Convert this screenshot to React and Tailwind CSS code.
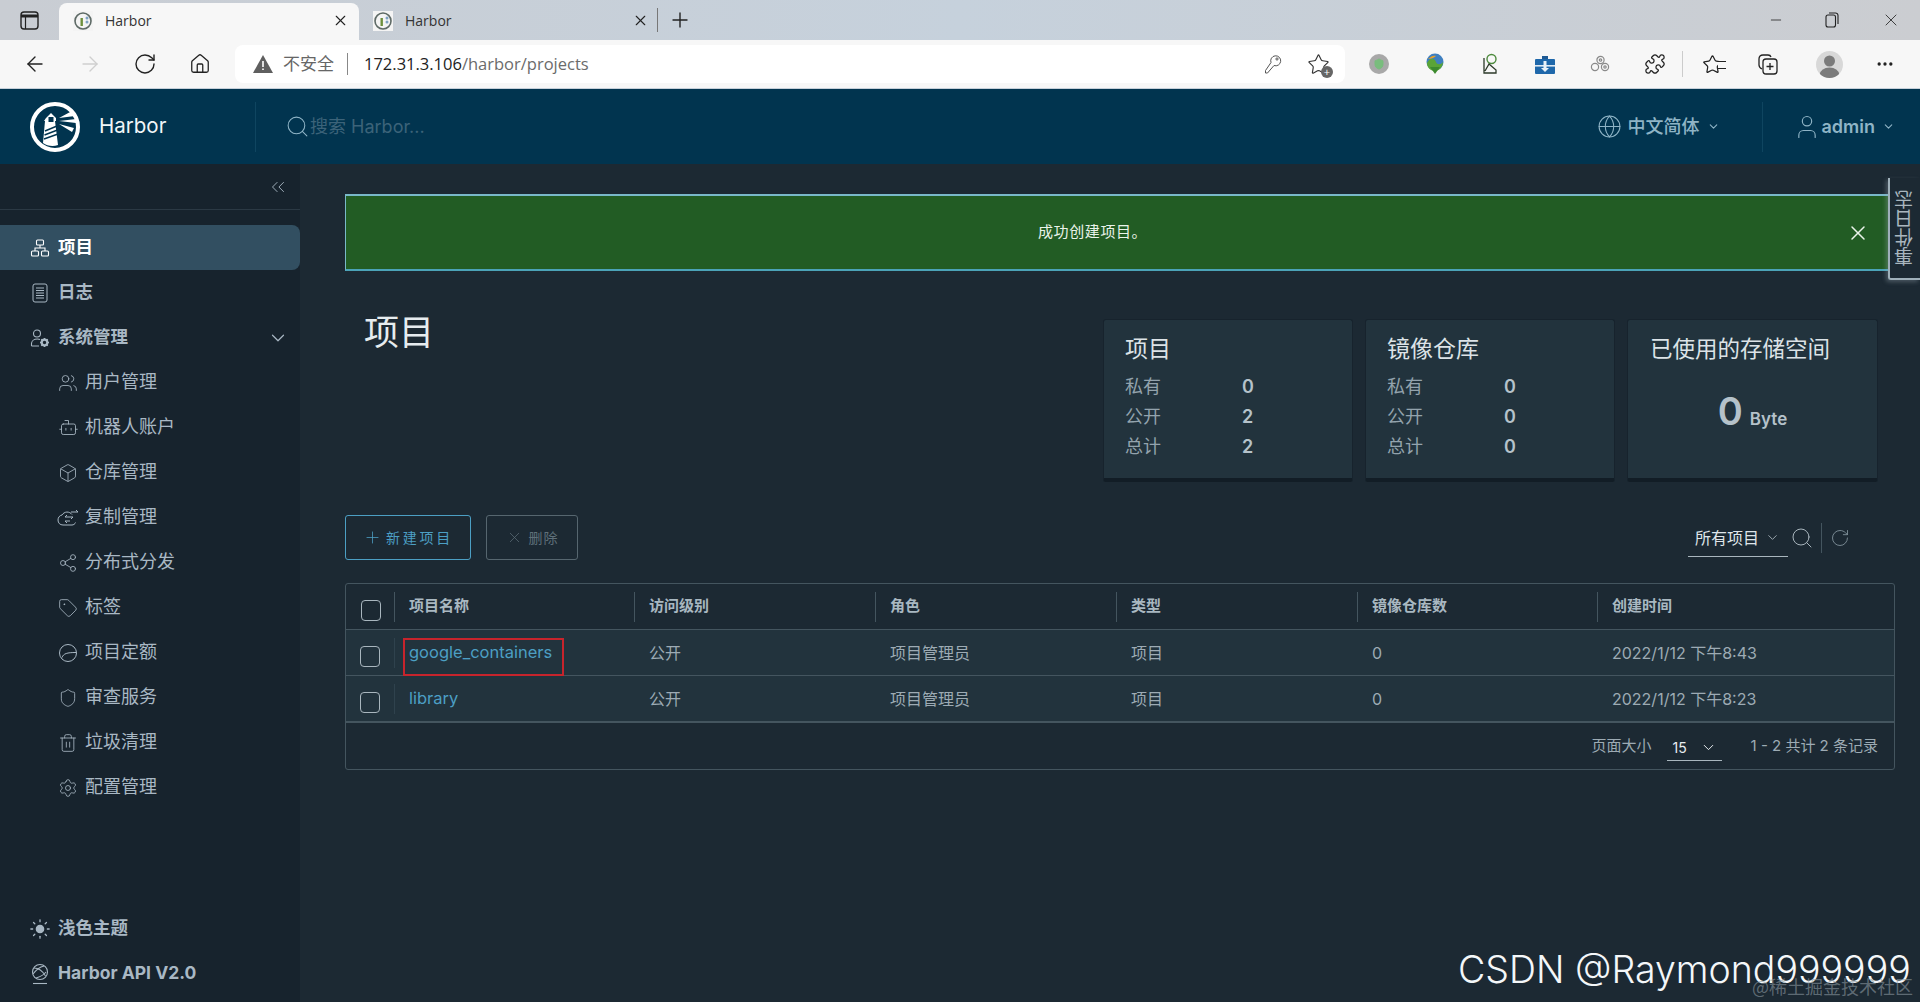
import React from 'react';
import {
  ArrowLeft, ArrowRight, RotateCw, Home, Puzzle, MoreHorizontal, X, Plus, Minus,
  ChevronDown, ChevronsLeft, Search, Globe, User, Share2, Tag, Shield, Trash2, Settings, Box,
  Bot, Users, Sun, Star,
} from 'lucide-react';

const UI = { fontFamily: '"Inter", "Noto Sans CJK SC", sans-serif' };
const CHROME = { fontFamily: '"Open Sans", "Noto Sans CJK SC", sans-serif' };

function Favicon() {
  return (
    <svg width="20" height="20" viewBox="0 0 20 20">
      <rect width="20" height="20" fill="#f4f4f4" />
      <circle cx="10" cy="10" r="8" fill="none" stroke="#5e6a66" strokeWidth="1.6" />
      <rect x="7.5" y="7" width="2.4" height="8" fill="#6d8f3c" />
      <circle cx="14" cy="7" r="1.5" fill="#7ea3c4" />
      <circle cx="14" cy="11" r="1.5" fill="#7ea3c4" />
    </svg>
  );
}

function Tab({ active }) {
  return (
    <div className={`flex items-center w-[300px] h-[37px] pl-[14px] pr-[10px] pb-[2px] text-[14px] text-[#333] ${active ? 'bg-[#f7f7f7] rounded-t-lg' : ''}`}>
      <Favicon />
      <span className="ml-[12px] flex-1">Harbor</span>
      <X size={17} strokeWidth={1.6} className="text-[#222]" />
    </div>
  );
}

function TabStrip() {
  return (
    <div className="h-[40px] flex items-end bg-gradient-to-r from-[#c9cdd3] via-[#c6d1dc] to-[#cbcdd1] shrink-0">
      <div className="w-[59px] h-[40px] flex items-center justify-center">
        <svg width="19" height="19" viewBox="0 0 19 19" fill="none">
          <rect x="1" y="1" width="17" height="17" rx="3" stroke="#222" strokeWidth="1.4" />
          <path d="M1 5h17" stroke="#222" strokeWidth="3" />
          <path d="M5.5 5v13" stroke="#222" strokeWidth="1.2" />
        </svg>
      </div>
      <Tab active />
      <Tab />
      <div className="h-[40px] flex items-center -ml-[2px]">
        <div className="w-px h-[24px] bg-[#777]" />
        <Plus size={24} strokeWidth={1.4} className="ml-[10px] text-[#222]" />
      </div>
      <div className="ml-auto h-[40px] flex items-center text-[#222]">
        <Minus size={16} strokeWidth={1.2} className="mr-[41px]" />
        <svg width="14" height="16" viewBox="0 0 14 16" fill="none" stroke="#222" strokeWidth="1.1" className="mr-[42px]">
          <rect x="1" y="3" width="9.5" height="12" rx="2" />
          <path d="M4 1h6.5A2.5 2.5 0 0 1 13 3.5V12" />
        </svg>
        <X size={20} strokeWidth={1} className="mr-[19px]" />
      </div>
    </div>
  );
}

function ToolbarSlot({ width, children }) {
  return <div style={{ width }} className="flex items-center justify-center shrink-0">{children}</div>;
}

function Toolbar() {
  return (
    <div className="h-[49px] bg-[#f7f7f7] border-b border-[#c6d0da] flex items-center shrink-0" style={CHROME}>
      <div className="w-[235px] flex items-center pl-[23px] gap-[31px] text-[#222] shrink-0">
        <ArrowLeft size={24} strokeWidth={1.4} />
        <ArrowRight size={24} strokeWidth={1.4} className="text-[#cfcfcf]" />
        <RotateCw size={24} strokeWidth={1.4} />
        <Home size={22} strokeWidth={1.4} className="ml-px" />
      </div>
      <div className="w-[1110px] h-[38px] bg-white rounded-lg flex items-center pl-[18px] shrink-0">
        <svg width="20" height="18" viewBox="0 0 20 18">
          <path d="M10 0 20 18H0Z" fill="#5f5f5f" />
          <path d="M9.2 6h1.6v6H9.2zM9.2 13.4h1.6V15H9.2z" fill="#fff" />
        </svg>
        <span className="ml-[10px] text-[17px] text-[#666]">不安全</span>
        <div className="w-px h-[22px] bg-[#888] ml-[13px]" />
        <span className="ml-[16px] text-[16.5px] text-[#222]">172.31.3.106<span className="text-[#6b6b6b]">/harbor/projects</span></span>
        <svg width="18" height="20" viewBox="0 0 18 20" fill="none" stroke="#555" strokeWidth="1" className="ml-auto mr-[25px]">
          <path d="M7 8.500a5 5 0 1 1 3 3L3.500 19H1.500v-2.500z" />
          <circle cx="13" cy="5" r="1.100" />
        </svg>
        <div className="relative mr-[15px]">
          <Star size={23} strokeWidth={1.2} className="text-[#333]" />
          <span className="absolute -right-[3px] -bottom-[2px] w-[12px] h-[12px] rounded-full bg-[#666] text-white text-[11px] leading-[11px] text-center">+</span>
        </div>
      </div>
      <div className="flex items-center ml-[11px]">
        <ToolbarSlot width={51}>
          <div className="w-[20px] h-[20px] rounded-full bg-[#a8a8a8] flex items-center justify-center mr-[5px]">
            <Shield size={12} fill="#79bd7d" stroke="#79bd7d" />
          </div>
        </ToolbarSlot>
        <ToolbarSlot width={55}>
          <svg width="20" height="22" viewBox="0 0 20 22">
            <circle cx="10" cy="9" r="8.5" fill="#3f7fc0" />
            <path d="M2 10c3-6 8-5 9-1 1 3 5 3 7 0 0 5-4 9-8 9-5 0-8-4-8-8Z" fill="#5aa437" />
            <path d="M5 14h10l-5 7Z" fill="#3c8a2e" />
            <path d="M3 6c3-3 6-4 8-3-2 2-5 3-8 3Z" fill="#e8a12a" />
          </svg>
        </ToolbarSlot>
        <ToolbarSlot width={55}>
          <svg width="16" height="22" viewBox="0 0 16 22" fill="none">
            <circle cx="9.5" cy="6" r="4.5" stroke="#4d8a3d" strokeWidth="1.4" />
            <path d="M2 5v15h12v-3L7 11 3 18" stroke="#2d3a2a" strokeWidth="1.3" />
          </svg>
        </ToolbarSlot>
        <ToolbarSlot width={55}>
          <svg width="20" height="21" viewBox="0 0 20 21">
            <path d="M7 2h6v4H7z" fill="#1e5a94" />
            <rect y="5" width="20" height="15" rx="1" fill="#1f68ab" />
            <path d="M0 11h20v1.6H0z" fill="#dfeaf4" />
            <path d="M8.5 7h3v7h2.5L10 18l-4-4h2.5z" fill="#eaf2f8" />
          </svg>
        </ToolbarSlot>
        <ToolbarSlot width={55}>
          <svg width="20" height="18" viewBox="0 0 20 18" fill="none" stroke="#8a8a8a" strokeWidth="1.2">
            <circle cx="5" cy="12" r="3.6" />
            <circle cx="10.5" cy="5" r="3.6" />
            <circle cx="15" cy="12" r="3.6" />
            <circle cx="15" cy="12" r="1.2" />
            <circle cx="10.5" cy="5" r="1.2" />
          </svg>
        </ToolbarSlot>
        <ToolbarSlot width={55}>
          <Puzzle size={22} strokeWidth={1.4} className="text-[#222]" />
        </ToolbarSlot>
        <div className="w-px h-[26px] bg-[#ccc] shrink-0" />
        <ToolbarSlot width={58}>
          <div className="relative">
            <Star size={21} strokeWidth={1.4} className="text-[#222]" />
            <div className="absolute right-[-3px] top-[7px] w-[8px] h-[8px] border-y border-[#222] bg-[#f7f7f7]" />
          </div>
        </ToolbarSlot>
        <ToolbarSlot width={54}>
          <svg width="22" height="22" viewBox="0 0 22 22" fill="none" stroke="#222" strokeWidth="1.3">
            <path d="M5 16C3 15 2 14 2 12V6c0-2.500 1.500-4 4-4h5c1.500 0 2.500.5 3 2" />
            <rect x="6" y="6" width="14" height="15" rx="3" />
            <path d="M13 10v7M9.500 13.500h7" />
          </svg>
        </ToolbarSlot>
        <ToolbarSlot width={68}>
          <div className="w-[27px] h-[27px] rounded-full bg-[#d8d8d8] flex items-center justify-center overflow-hidden">
            <svg width="27" height="27" viewBox="0 0 27 27">
              <circle cx="13.5" cy="10" r="5.500" fill="#7b7b7b" />
              <ellipse cx="13.5" cy="24" rx="10" ry="7.500" fill="#7b7b7b" />
            </svg>
          </div>
        </ToolbarSlot>
        <ToolbarSlot width={44}>
          <MoreHorizontal size={20} strokeWidth={2} className="text-[#222]" />
        </ToolbarSlot>
      </div>
    </div>
  );
}

function HarborLogo() {
  return (
    <svg width="50" height="50" viewBox="0 0 50 50">
      <circle cx="25" cy="25" r="23" fill="#01344f" stroke="#fff" strokeWidth="4" />
      <path d="M16 16l5-5 5 5v3h-1l3 24c-5 2-11 1-15-2l2-22h-1z" fill="#fff" />
      <rect x="18.500" y="15" width="5" height="5" fill="#01344f" />
      <path d="M15 29l12-5M14.500 33l13-5M14 37l14-5" stroke="#01344f" strokeWidth="1.4" />
      <path d="M29 16l13-7 3 5zM29 19l17-2v4zM29 22l15 4-2 4z" fill="#fff" />
    </svg>
  );
}

function Header() {
  return (
    <div className="h-[75px] bg-[#01344f] flex items-center shrink-0 text-[#8fb4c6]" style={UI}>
      <div className="w-[256px] h-[50px] border-r border-[#0f4560] flex items-center pl-[30px] shrink-0">
        <HarborLogo />
        <span className="ml-[19px] text-[20.500px] text-[#f1f6f8]">Harbor</span>
      </div>
      <Search size={25} strokeWidth={1} className="ml-[29px] text-[#8fb4c6]" />
      <span className="text-[18px] text-[#3c6379]">搜索 Harbor...</span>
      <div className="ml-auto flex items-center">
        <Globe size={25} strokeWidth={1} />
        <span className="ml-[6px] text-[18px] font-medium">中文简体</span>
        <ChevronDown size={13} className="ml-[7px]" />
        <div className="w-px h-[50px] bg-[#0f4560] ml-[42px]" />
        <User size={28} strokeWidth={1} className="ml-[30px]" />
        <span className="ml-[1px] text-[18px] font-semibold">admin</span>
        <ChevronDown size={13} className="ml-[7px] mr-[25px]" />
      </div>
    </div>
  );
}

function OrgIcon() {
  return (
    <svg width="20" height="20" viewBox="0 0 20 20" fill="none" stroke="currentColor" strokeWidth="1.1">
      <rect x="6.500" y="2" width="7" height="5" rx="1" />
      <rect x="1.500" y="13" width="7" height="5" rx="1" />
      <rect x="11.500" y="13" width="7" height="5" rx="1" />
      <path d="M10 7v3M5 13v-3h10v3" />
    </svg>
  );
}

function AdminIcon() {
  return (
    <svg width="20" height="20" viewBox="0 0 20 20" fill="none" stroke="currentColor" strokeWidth="1.1">
      <circle cx="7" cy="5.500" r="3.500" />
      <path d="M1.500 18v-2.500C1.500 13 4 11 7.500 11c1 0 1.800.1 2.500.4M1.500 18H9" />
      <circle cx="14.500" cy="14.500" r="2.800" strokeWidth="2.200" />
      <path d="M14.500 10v2M14.500 17v2M10 14.500h2M17 14.500h2M11.300 11.300l1.400 1.400M16.300 16.300l1.400 1.400M11.300 17.700l1.400-1.400M16.300 12.700l1.400-1.400" strokeWidth="1.500" />
    </svg>
  );
}

function ApiIcon() {
  return (
    <svg width="20" height="22" viewBox="0 0 20 22" fill="none" stroke="currentColor" strokeWidth="1.1">
      <circle cx="10" cy="9" r="7.500" />
      <path d="M4 5c3 0 8 2 11.500 8M3 11c3-4 7-7 11-8M6 15c3-1 7-2 10-6" />
      <path d="M3 20.500h14" />
    </svg>
  );
}

function DocIcon() {
  return (
    <svg width="16" height="20" viewBox="0 0 16 20" fill="none" stroke="currentColor">
      <rect x="1" y="1" width="14" height="18" rx="2" />
      <path d="M4 5h8M4 7.500h8M4 10h8M4 12.500h8M4 15h8" />
    </svg>
  );
}

function QuotaIcon() {
  return (
    <svg width="20" height="20" viewBox="0 0 20 20" fill="none" stroke="currentColor">
      <circle cx="10" cy="10" r="8.500" />
      <path d="M4 14.500C5.500 10.500 9 9.500 18 9.500" />
    </svg>
  );
}

function ReplicationIcon() {
  return (
    <svg width="22" height="20" viewBox="0 0 22 20" fill="none" stroke="currentColor">
      <path d="M15 6.500A6 6 0 0 0 5 7C2.500 7.500 1 9.500 1 12c0 3 2 5 5 5h9c1.500 0 3-1 3.500-2.500" />
      <path d="M16 9h-8l2-2M16 9l-2 2M14 4h7l-2-2M13 13H8l2 2" />
    </svg>
  );
}

const SUB_ITEMS = [
  ['用户管理', <Users size={20} strokeWidth={1} />],
  ['机器人账户', <Bot size={21} strokeWidth={1} />],
  ['仓库管理', <Box size={20} strokeWidth={1} />],
  ['复制管理', <ReplicationIcon />],
  ['分布式分发', <Share2 size={20} strokeWidth={1} />],
  ['标签', <Tag size={20} strokeWidth={1} />],
  ['项目定额', <QuotaIcon />],
  ['审查服务', <Shield size={20} strokeWidth={1} />],
  ['垃圾清理', <Trash2 size={20} strokeWidth={1} />],
  ['配置管理', <Settings size={20} strokeWidth={1} />],
];

function NavItem({ icon, label, active, sub, right }) {
  return (
    <div className={`h-[45px] flex items-center rounded-r-lg ${active ? 'bg-[#324f61] text-white' : 'text-[#a9b8c4]'}`}>
      <div className={`flex justify-center shrink-0 ${sub ? 'w-[22px] ml-[57px]' : 'w-[22px] ml-[29px]'}`}>{icon}</div>
      <span className={sub ? 'ml-[6px] -mt-[2px] text-[18px]' : 'ml-[7px] text-[17.5px] font-bold'}>{label}</span>
      {right}
    </div>
  );
}

function Sidebar() {
  return (
    <div className="w-[300px] bg-[#17232d] flex flex-col shrink-0" style={UI}>
      <div className="h-[46px] border-b border-[#2b3944] flex items-center justify-end pr-[11px] text-[#a9b8c4]">
        <ChevronsLeft size={22} strokeWidth={1} />
      </div>
      <div className="mt-[15px]">
        <NavItem active label="项目" icon={<OrgIcon />} />
        <NavItem label="日志" icon={<DocIcon />} />
        <NavItem
          label="系统管理"
          icon={<AdminIcon />}
          right={<ChevronDown size={22} strokeWidth={1.3} className="ml-auto mr-[11px]" />}
        />
        {SUB_ITEMS.map(([label, icon]) => (
          <NavItem key={label} sub label={label} icon={icon} />
        ))}
      </div>
      <div className="mt-auto mb-[6px]">
        <NavItem label="浅色主题" icon={<Sun size={22} strokeWidth={1.4} fill="currentColor" />} />
        <NavItem label="Harbor API V2.0" icon={<ApiIcon />} />
      </div>
    </div>
  );
}

function StatCard({ title, rows }) {
  return (
    <div className="w-[250px] h-[163px] bg-[#22333d] rounded-[3px] border border-[#17232d] border-b-[4px] border-b-[#121d26] pl-[21px] pt-[14px]">
      <div className="text-[23px] leading-[30px] text-[#dce3e7]">{title}</div>
      <div className="mt-[7px]">
        {rows.map(([label, value]) => (
          <div key={label} className="h-[30px] flex items-center text-[18px]">
            <span className="w-[117px] text-[#93a3ad]">{label}</span>
            <span className="font-semibold text-[#b5c2ca]">{value}</span>
          </div>
        ))}
      </div>
    </div>
  );
}

function Checkbox() {
  return <div className="w-[20px] h-[21px] rounded-[4px] border border-[#a9b6be]" />;
}

const COLS = 'grid-cols-[49px_240px_241px_241px_241px_240px_1fr]';
const HEADERS = ['项目名称', '访问级别', '角色', '类型', '镜像仓库数', '创建时间'];
const ROWS = [
  ['google_containers', '公开', '项目管理员', '项目', '0', '2022/1/12 下午8:43'],
  ['library', '公开', '项目管理员', '项目', '0', '2022/1/12 下午8:23'],
];

function Table() {
  return (
    <div className="mt-[23px] h-[187px] border border-[#44555f] rounded-[3px] flex flex-col">
      <div className={`grid ${COLS} h-[46px] border-b border-[#44555f] text-[15px] font-bold text-[#a9b8c1]`}>
        <div className="flex items-center justify-center pt-[8px]"><Checkbox /></div>
        {HEADERS.map(h => (
          <div key={h} className="flex items-center -ml-px">
            <div className="h-[30px] border-l border-[#44555f] flex items-center pl-[14px]">{h}</div>
          </div>
        ))}
      </div>
      {ROWS.map((row, r) => (
        <div key={row[0]} className={`grid ${COLS} bg-[#22333d] text-[16px] text-[#9dabb4] ${r === 1 ? 'border-b-2 border-[#44555f] h-[47px]' : 'h-[46px] border-b border-[#44555f]'}`}>
          <div className="flex items-center">
            <div className="w-[48px] flex justify-center pt-[8px]"><Checkbox /></div>
            <div className="h-[30px] border-l border-[#2f424d]" />
          </div>
          {row.map((cell, i) => (
            <div key={i} className={`flex items-center pl-[14px] ${i === 0 ? 'text-[#4c9fc4] text-[16.500px] relative' : ''}`}>
              {cell}
              {r === 0 && i === 0 && (
                <div className="absolute left-[8px] top-[8px] w-[161px] h-[38px] border-2 border-[#c7242c]" />
              )}
            </div>
          ))}
        </div>
      ))}
      <div className="flex-1 flex items-center justify-end text-[15px] text-[#9dabb4] pr-[16px]">
        <span>页面大小</span>
        <div className="ml-[15px] w-[55px] h-[30px] border-b border-[#a9b6be] flex items-center justify-between pl-[6px] pr-[5px] pt-[3px] text-[14px] text-[#e8edf0]">
          15
          <ChevronDown size={17} strokeWidth={1.4} />
        </div>
        <span className="ml-[29px]">1 - 2 共计 2 条记录</span>
      </div>
    </div>
  );
}

function Main() {
  return (
    <div className="flex-1 bg-[#1c2933] pl-[45px] pr-[25px] pt-[30px] min-w-0" style={UI}>
      <div className="h-[77px] mr-[7px] bg-[#225c24] border-y-2 border-l border-t-[#79b8c9] border-b-[#4ba3b8] border-l-[#79b8c9] flex items-center text-[#eaf3ea] text-[15px]">
        <span className="ml-[692px] tracking-[0.6px]">成功创建项目。</span>
        <X size={24} strokeWidth={1.5} className="ml-auto mr-[18px]" />
      </div>

      <div className="flex mt-[48px]">
        <div className="ml-[19px] text-[35px] leading-[48px] -mt-[11px] text-[#e6ecef]">项目</div>
        <div className="ml-auto mr-[17px] flex gap-[12px]">
          <StatCard title="项目" rows={[['私有', '0'], ['公开', '2'], ['总计', '2']]} />
          <StatCard title="镜像仓库" rows={[['私有', '0'], ['公开', '0'], ['总计', '0']]} />
          <div className="w-[251px] h-[163px] bg-[#22333d] rounded-[3px] border border-[#17232d] border-b-[4px] border-b-[#121d26] pt-[14px]">
            <div className="pl-[22px] text-[22.500px] leading-[30px] text-[#dce3e7]">已使用的存储空间</div>
            <div className="mt-[25px] flex items-end justify-center text-[#b5c2ca] font-semibold">
              <span className="text-[38px] leading-[44px]">0</span>
              <span className="ml-[7px] mb-[1px] text-[17px]">Byte</span>
            </div>
          </div>
        </div>
      </div>

      <div className="flex items-center mt-[33px] h-[45px]">
        <div className="w-[126px] h-[45px] rounded-[3px] border border-[#4c9fc4] flex items-center justify-center text-[14px] tracking-[2.800px] text-[#4c9fc4]">
          <Plus size={19} strokeWidth={1} className="mr-[4px]" />
          新建项目
        </div>
        <div className="ml-[15px] w-[92px] h-[45px] rounded-[3px] border border-[#56666f] flex items-center justify-center text-[14px] tracking-[1px] text-[#5f707a]">
          <X size={17} strokeWidth={1} className="mr-[6px]" />
          删除
        </div>
        <div className="ml-auto mr-[45px] flex items-center text-[#dfe5e9]">
          <div className="w-[100px] h-[38px] mt-[1px] border-b border-[#a9b6be] flex items-center pl-[7px] text-[16px]">
            所有项目
            <ChevronDown size={15} strokeWidth={1.4} className="ml-[6px] text-[#a9b6be]" />
          </div>
          <Search size={24} strokeWidth={1} className="ml-[2px] text-[#a9b6be]" />
          <div className="w-px h-[30px] bg-[#44555f] ml-[7px]" />
          <RotateCw size={20} strokeWidth={1} className="ml-[8px] text-[#8797a1]" />
        </div>
      </div>

      <Table />
    </div>
  );
}

export default function App() {
  return (
    <div className="w-[1920px] h-[1002px] flex flex-col overflow-hidden relative">
      <div style={CHROME}><TabStrip /></div>
      <Toolbar />
      <Header />
      <div className="flex-1 flex min-h-0">
        <Sidebar />
        <Main />
      </div>
      <div className="absolute right-0 top-[178px] w-[32px] h-[102px] bg-[#1c2933] border-l-2 border-b-2 border-[#9fb0ba] rounded-bl-[3px] shadow-[-2px_2px_4px_rgba(160,175,185,0.35)] flex items-center justify-center" style={UI}>
        <span className="text-[#a9b6be] text-[19px] [writing-mode:vertical-rl] rotate-180 leading-none">事件日志</span>
      </div>
      <div className="absolute left-[1458px] top-[946px] text-[37.500px] font-light leading-[48px] text-[#f4f7f9] whitespace-nowrap" style={UI}>
        CSDN @Raymond999999
      </div>
      <div className="absolute left-[1752px] top-[975px] text-[18px] leading-[22px] text-[#8b979f]/60 whitespace-nowrap" style={{ fontFamily: '"Noto Sans CJK SC", serif' }}>
        @稀土掘金技术社区
      </div>
    </div>
  );
}
